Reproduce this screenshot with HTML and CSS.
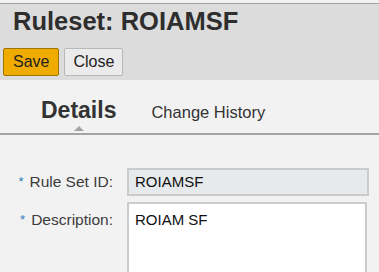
FILE: index.html
```html
<!DOCTYPE html>
<html lang="en">
  <head>
    <meta charset="UTF-8" />
    <meta name="viewport" content="width=device-width, initial-scale=1.0" />
    <title>Ruleset: ROIAMSF</title>
    <link rel="stylesheet" href="styles.css">
  </head>
  <body>
    <div class="header">
      <h1 class="title">Ruleset: ROIAMSF</h1>
      <div class="toolbar">
        <button class="btn save">Save</button>
        <button class="btn close">Close</button>
      </div>
    </div>

    <div class="tabs">
      <span class="tab active">Details</span>
      <span class="tab">Change History</span>
    </div>

    <div class="form">
      <div class="row">
        <label class="label"><span class="req">*</span>Rule Set ID:</label>
        <div class="field readonly">ROIAMSF</div>
      </div>
      <div class="row">
        <label class="label"><span class="req">*</span>Description:</label>
        <div class="field area">ROIAM SF</div>
      </div>
    </div>
  </body>
</html>
```

FILE: styles.css
```css
body {
  margin: 0;
  padding-top: 3px;
  background-color: #f2f2f2;
  font-family: "Liberation Sans", Arial, sans-serif;
  color: #333;
  overflow: hidden;
}
.header {
  background-color: #dcdcdc;
  border-top: 1px solid #a0a0a0;
  padding: 2px 0 4px 3px;
}
.title {
  margin: 0 0 0 10px;
  font-size: 25.5px;
  line-height: 30px;
  font-weight: bold;
  color: #2e2e2e;
}
.toolbar {
  display: flex;
  gap: 5px;
  margin-top: 12px;
}
.btn {
  height: 28px;
  padding: 0 9px;
  font-family: inherit;
  font-size: 16px;
  color: #222;
  border-radius: 2px;
  cursor: pointer;
}
.btn.save {
  background-color: #f0ab00;
  border: 1px solid #a07400;
}
.btn.close {
  background-color: #ebebeb;
  border: 1px solid #b8b8b8;
  padding: 0 8px;
}
.tabs {
  display: flex;
  align-items: baseline;
  gap: 35px;
  padding: 16px 0 7px 41px;
  border-bottom: 2px solid #a3a3a3;
}
.tab {
  font-size: 16.5px;
  line-height: 28px;
  color: #333;
}
.tab.active {
  position: relative;
  font-size: 23px;
  font-weight: bold;
}
.tab.active::after {
  content: "";
  position: absolute;
  left: 50%;
  bottom: -7px;
  margin-left: -5px;
  border-left: 5px solid transparent;
  border-right: 5px solid transparent;
  border-bottom: 5px solid #a3a3a3;
}
.form {
  padding-top: 33px;
  display: grid;
  gap: 6px;
}
.row {
  display: grid;
  grid-template-columns: 113px 242px;
  column-gap: 14px;
  align-items: baseline;
}
.label {
  text-align: right;
  font-size: 15.5px;
  color: #3c3c3c;
}
.req {
  color: #2b7cb8;
  font-size: 13px;
  margin-right: 6px;
  vertical-align: 1px;
}
.field {
  box-sizing: border-box;
  font-size: 15px;
  line-height: 18px;
  color: #111;
  border: 2px solid #cbcbcb;
  padding: 3px 6px;
}
.field.readonly {
  height: 28px;
  background-color: #e6eaed;
}
.field.area {
  width: 240px;
  height: 80px;
  padding-top: 7px;
  background-color: #fff;
}
```
